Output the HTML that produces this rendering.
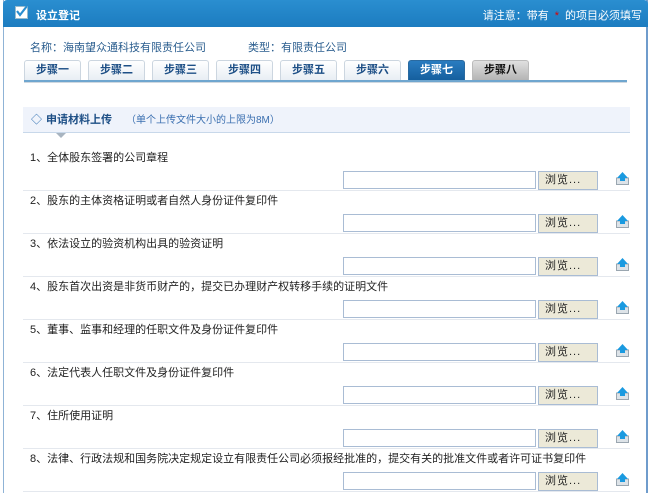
<!DOCTYPE html>
<html><head><meta charset="utf-8"><style>
*{margin:0;padding:0;box-sizing:border-box}
body{width:653px;height:493px;overflow:hidden;background:#fff;font-family:"Liberation Sans","Noto Sans CJK SC",sans-serif;font-size:11px;color:#222;position:relative}
.frame{position:absolute;left:3px;top:0;width:645px;height:493px;border-left:1px solid #8fb3d6;border-right:2px solid #6f9ccc;}
.hdr{position:absolute;left:3px;top:0;width:645px;height:27px;background:linear-gradient(#2a8ed0,#1c7cc0);border-radius:4px 4px 0 0;color:#fff}
.hdr .t{position:absolute;left:33px;top:7px;font-weight:bold;font-size:11px}
.hdr .r{position:absolute;right:6px;top:7px;font-size:11px}
.hdr .r b{color:#d00;font-weight:normal;margin:0 6px}
.cb{position:absolute;left:12px;top:6px;width:13px;height:13px;background:#fff;border:1px solid #9bc;}
.info{position:absolute;top:39px;font-size:11px;color:#2a5d8e}
.tab{position:absolute;top:60px;height:20px;width:57px;border:1px solid #ccd6e0;border-bottom:none;border-radius:3px 3px 0 0;background:linear-gradient(#fff,#e8eef4);text-align:center;line-height:18px;font-weight:bold;color:#1d4f86;font-size:11px}
.tab.a{background:linear-gradient(#2a7cc0,#155f9e);color:#fff;border-color:#2a6aa0}
.tab.g{background:linear-gradient(#e0e0e0,#b4b4b4);color:#111;border-color:#bbb}
.bar{position:absolute;left:24px;top:80px;width:603px;height:3px;background:#6fa6cf;border-bottom:1px solid #cfd8e0}
.sec{position:absolute;left:23px;top:107px;width:607px;height:26px;background:#eff3fb;border-bottom:1px solid #c8d8ea;line-height:26px;padding-left:8px}
.sec .d{color:#2a6cb0;font-size:11px}
.sec b{color:#1d4f86;margin-left:4px}
.sec span.n{color:#3a6fb0;font-size:10px;margin-left:14px}
.arr{position:absolute;left:56px;top:133px;width:0;height:0;border-left:5px solid transparent;border-right:5px solid transparent;border-top:5px solid #a8b4c0}
.rows{position:absolute;left:23px;top:148px;width:607px}
.row{height:43px;border-bottom:1px solid #e4e8ee;position:relative}
.row .l{height:20px;line-height:18px;padding-top:1px;padding-left:7px;font-size:11px;color:#222}
.in{position:absolute;left:320px;top:23px;width:193px;height:18px;border:1px solid #a9bcd4;background:#fff}
.bt{position:absolute;left:515px;top:23px;width:60px;height:19px;border:1px solid #a9bcd4;background:#ece9d8;font-size:11px;line-height:17px;padding-left:6px;letter-spacing:1px}
.ic{position:absolute;left:593px;top:23px;width:13px;height:14px}
</style></head><body>
<div class="frame"></div>
<div class="hdr"><div class="cb"><svg width="13" height="13" style="position:absolute;left:-1px;top:-2px"><path d="M2 6 L5 10 L12 1" stroke="#2a8ed0" stroke-width="2.2" fill="none"/></svg></div><div class="t">设立登记</div><div class="r">请注意：带有<b>*</b>的项目必须填写</div></div>
<div class="info" style="left:30px">名称：海南望众通科技有限责任公司</div>
<div class="info" style="left:248px">类型：有限责任公司</div>
<div class="tab" style="left:24px">步骤一</div>
<div class="tab" style="left:88px">步骤二</div>
<div class="tab" style="left:152px">步骤三</div>
<div class="tab" style="left:216px">步骤四</div>
<div class="tab" style="left:280px">步骤五</div>
<div class="tab" style="left:344px">步骤六</div>
<div class="tab a" style="left:408px">步骤七</div>
<div class="tab g" style="left:472px">步骤八</div>
<div class="bar"></div>
<div class="sec"><span class="d">◇</span><b>申请材料上传</b><span class="n">（单个上传文件大小的上限为8M）</span></div>
<div class="arr"></div>
<div class="rows">
<div class="row"><div class="l">1、全体股东签署的公司章程</div><div class="in"></div><div class="bt">浏览...</div><svg class="ic" viewBox="0 0 13 14"><rect x="0.5" y="7" width="12" height="6.5" fill="#dde3e8" stroke="#9aa6b0"/><path d="M6.5 1 L12 7 L9 7 L9 10 L4 10 L4 7 L1 7 Z" fill="#1a9ae0"/></svg></div>
<div class="row"><div class="l">2、股东的主体资格证明或者自然人身份证件复印件</div><div class="in"></div><div class="bt">浏览...</div><svg class="ic" viewBox="0 0 13 14"><rect x="0.5" y="7" width="12" height="6.5" fill="#dde3e8" stroke="#9aa6b0"/><path d="M6.5 1 L12 7 L9 7 L9 10 L4 10 L4 7 L1 7 Z" fill="#1a9ae0"/></svg></div>
<div class="row"><div class="l">3、依法设立的验资机构出具的验资证明</div><div class="in"></div><div class="bt">浏览...</div><svg class="ic" viewBox="0 0 13 14"><rect x="0.5" y="7" width="12" height="6.5" fill="#dde3e8" stroke="#9aa6b0"/><path d="M6.5 1 L12 7 L9 7 L9 10 L4 10 L4 7 L1 7 Z" fill="#1a9ae0"/></svg></div>
<div class="row"><div class="l">4、股东首次出资是非货币财产的，提交已办理财产权转移手续的证明文件</div><div class="in"></div><div class="bt">浏览...</div><svg class="ic" viewBox="0 0 13 14"><rect x="0.5" y="7" width="12" height="6.5" fill="#dde3e8" stroke="#9aa6b0"/><path d="M6.5 1 L12 7 L9 7 L9 10 L4 10 L4 7 L1 7 Z" fill="#1a9ae0"/></svg></div>
<div class="row"><div class="l">5、董事、监事和经理的任职文件及身份证件复印件</div><div class="in"></div><div class="bt">浏览...</div><svg class="ic" viewBox="0 0 13 14"><rect x="0.5" y="7" width="12" height="6.5" fill="#dde3e8" stroke="#9aa6b0"/><path d="M6.5 1 L12 7 L9 7 L9 10 L4 10 L4 7 L1 7 Z" fill="#1a9ae0"/></svg></div>
<div class="row"><div class="l">6、法定代表人任职文件及身份证件复印件</div><div class="in"></div><div class="bt">浏览...</div><svg class="ic" viewBox="0 0 13 14"><rect x="0.5" y="7" width="12" height="6.5" fill="#dde3e8" stroke="#9aa6b0"/><path d="M6.5 1 L12 7 L9 7 L9 10 L4 10 L4 7 L1 7 Z" fill="#1a9ae0"/></svg></div>
<div class="row"><div class="l">7、住所使用证明</div><div class="in"></div><div class="bt">浏览...</div><svg class="ic" viewBox="0 0 13 14"><rect x="0.5" y="7" width="12" height="6.5" fill="#dde3e8" stroke="#9aa6b0"/><path d="M6.5 1 L12 7 L9 7 L9 10 L4 10 L4 7 L1 7 Z" fill="#1a9ae0"/></svg></div>
<div class="row"><div class="l">8、法律、行政法规和国务院决定规定设立有限责任公司必须报经批准的，提交有关的批准文件或者许可证书复印件</div><div class="in"></div><div class="bt">浏览...</div><svg class="ic" viewBox="0 0 13 14"><rect x="0.5" y="7" width="12" height="6.5" fill="#dde3e8" stroke="#9aa6b0"/><path d="M6.5 1 L12 7 L9 7 L9 10 L4 10 L4 7 L1 7 Z" fill="#1a9ae0"/></svg></div>
</div>
</body></html>
